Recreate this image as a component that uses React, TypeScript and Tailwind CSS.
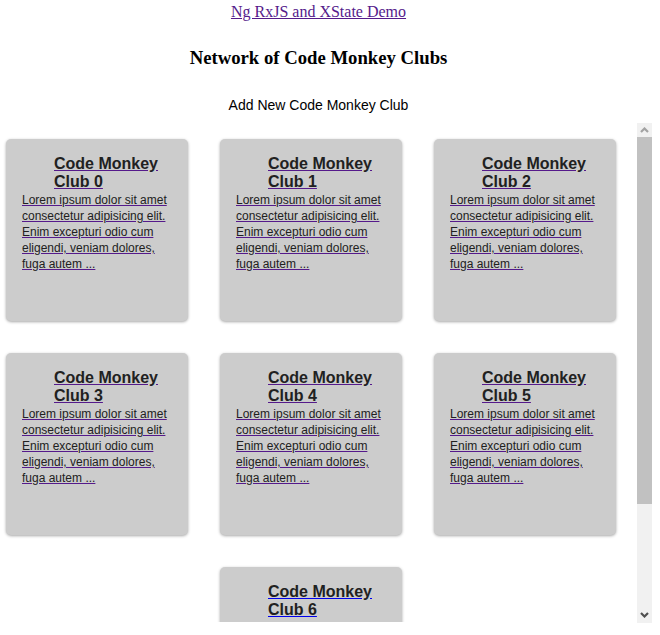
import React from "react";

const LOREM =
  "Lorem ipsum dolor sit amet consectetur adipisicing elit. Enim excepturi odio cum eligendi, veniam dolores, fuga autem ...";

function Card({ i }: { i: number }) {
  const visited = i < 6;
  const deco = visited ? "decoration-[#551a8b]" : "decoration-[#0000ee]";
  return (
    <a
      href="#"
      className="block w-[182px] h-[182px] shrink-0 rounded-[5px] bg-[#cccccc] shadow-[0_1px_3px_rgba(0,0,0,0.35)] px-4 pt-4 text-[#212121]"
    >
      <div className={`ml-8 text-[16px] leading-[18px] font-bold underline ${deco}`}>
        Code Monkey Club {i}
      </div>
      <div className={`mt-px text-[12px] leading-[16px] underline ${deco}`}>{LOREM}</div>
    </a>
  );
}

function Chevron({ up, color }: { up: boolean; color: string }) {
  return (
    <svg width="9" height="6" viewBox="0 0 9 6">
      <path
        d={up ? "M1 5 L4.5 1.5 L8 5" : "M1 1 L4.5 4.5 L8 1"}
        fill="none"
        stroke={color}
        strokeWidth="2.2"
      />
    </svg>
  );
}

export default function App() {
  return (
    <div className="w-[652px] bg-white font-['Liberation_Sans',Arial,sans-serif]">
      <div className="w-[637px] flex flex-col items-center">
        <a
          href="#"
          className="mt-[3px] font-['Liberation_Serif','Times_New_Roman',serif] text-[16px] leading-[18px] text-[#551a8b] underline"
        >
          Ng RxJS and XState Demo
        </a>
        <h3 className="mt-[26px] font-['Liberation_Serif','Times_New_Roman',serif] text-[18.72px] leading-[22px] font-bold text-black">
          Network of Code Monkey Clubs
        </h3>
        <button className="mt-[28px] text-[14px] leading-[16px] text-black">
          Add New Code Monkey Club
        </button>
      </div>
      <div className="mt-[10px] flex h-[500px] w-[652px]">
        <div className="h-[499px] w-[637px] overflow-hidden">
          <div className="w-[622px] flex flex-wrap justify-center gap-8 py-4">
            {[0, 1, 2, 3, 4, 5, 6].map((i) => (
              <Card key={i} i={i} />
            ))}
          </div>
        </div>
        <div className="flex h-full w-[15px] flex-col bg-[#f1f1f1]">
          <div className="flex h-[14px] items-center justify-center">
            <Chevron up color="#a3a3a3" />
          </div>
          <div className="h-[367px] bg-[#c1c1c1]" />
          <div className="flex-1" />
          <div className="flex h-[16px] items-center justify-center">
            <Chevron up={false} color="#505050" />
          </div>
        </div>
      </div>
    </div>
  );
}
